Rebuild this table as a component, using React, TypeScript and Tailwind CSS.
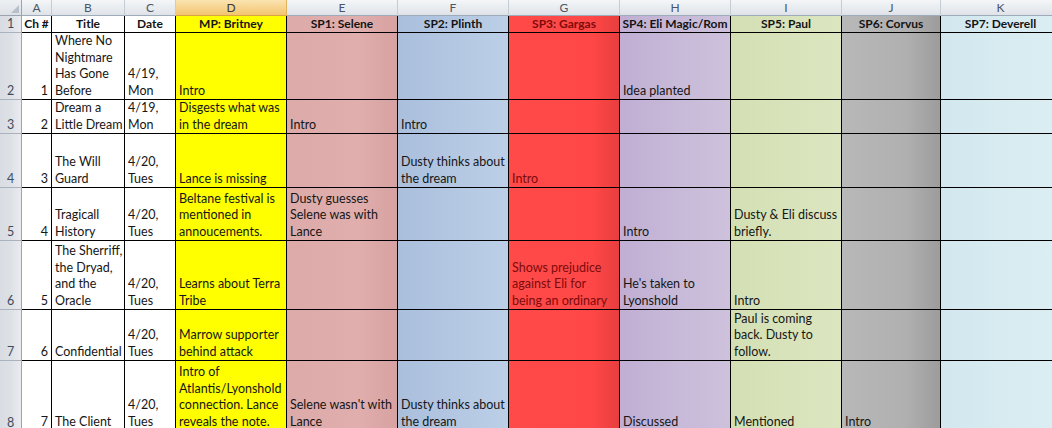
const colLetters = ["A", "B", "C", "D", "E", "F", "G", "H", "I", "J", "K"];

// fill per column, written out so tailwind picks them up
const fills: Record<string, string> = {
  A: "bg-white",
  B: "bg-white",
  C: "bg-white",
  D: "bg-[#ffff00]",
  E: "bg-linear-to-r from-[#dcaaa9] via-[#e0aead] via-65% to-[#d7a2a1]",
  F: "bg-linear-to-r from-[#aabfdc] via-[#b3c7e2] to-[#bccfe7]",
  G: "bg-linear-to-r from-[#ff4a4a] via-[#ff4747] via-75% to-[#e83e3e]",
  H: "bg-linear-to-r from-[#c0aed3] via-[#c7b9d8] to-[#cdc1dc]",
  I: "bg-linear-to-r from-[#d3dfb3] via-[#d8e3bb] to-[#dbe6c0]",
  J: "bg-linear-to-r from-[#b8b8b8] via-[#b0b0b0] via-65% to-[#9c9c9c]",
  K: "bg-linear-to-r from-[#d2e7ee] via-[#d7ebf1] to-[#dbeef3]",
};

const headers = [
  "Ch #",
  "Title",
  "Date",
  "MP: Britney",
  "SP1: Selene",
  "SP2: Plinth",
  "SP3: Gargas",
  "SP4: Eli Magic/Rom",
  "SP5: Paul",
  "SP6: Corvus",
  "SP7: Deverell",
];

type Row = { n: number; cells: Partial<Record<string, string[]>> };

const rows: Row[] = [
  {
    n: 2,
    cells: {
      A: ["1"],
      B: ["Where No", "Nightmare", "Has Gone", "Before"],
      C: ["4/19,", "Mon"],
      D: ["Intro"],
      H: ["Idea planted"],
    },
  },
  {
    n: 3,
    cells: {
      A: ["2"],
      B: ["Dream a", "Little Dream"],
      C: ["4/19,", "Mon"],
      D: ["Disgests what was", "in the dream"],
      E: ["Intro"],
      F: ["Intro"],
    },
  },
  {
    n: 4,
    cells: {
      A: ["3"],
      B: ["The Will", "Guard"],
      C: ["4/20,", "Tues"],
      D: ["Lance is missing"],
      F: ["Dusty thinks about", "the dream"],
      G: ["Intro"],
    },
  },
  {
    n: 5,
    cells: {
      A: ["4"],
      B: ["Tragicall", "History"],
      C: ["4/20,", "Tues"],
      D: ["Beltane festival is", "mentioned in", "annoucements."],
      E: ["Dusty guesses", "Selene was with", "Lance"],
      H: ["Intro"],
      I: ["Dusty & Eli discuss", "briefly."],
    },
  },
  {
    n: 6,
    cells: {
      A: ["5"],
      B: ["The Sherriff,", "the Dryad,", "and the", "Oracle"],
      C: ["4/20,", "Tues"],
      D: ["Learns about Terra", "Tribe"],
      G: ["Shows prejudice", "against Eli for", "being an ordinary"],
      H: ["He's taken to", "Lyonshold"],
      I: ["Intro"],
    },
  },
  {
    n: 7,
    cells: {
      A: ["6"],
      B: ["Confidential"],
      C: ["4/20,", "Tues"],
      D: ["Marrow supporter", "behind attack"],
      I: ["Paul is coming", "back. Dusty to", "follow."],
    },
  },
  {
    n: 8,
    cells: {
      A: ["7"],
      B: ["The Client"],
      C: ["4/20,", "Tues"],
      D: ["Intro of", "Atlantis/Lyonshold", "connection. Lance", "reveals the note."],
      E: ["Selene wasn't with", "Lance"],
      F: ["Dusty thinks about", "the dream"],
      H: ["Discussed"],
      I: ["Mentioned"],
      J: ["Intro"],
    },
  },
];

const RowHead = ({ n, last }: { n: number; last?: boolean }) => (
  <div
    className={`flex items-end justify-center border-r border-[#9aa4b1] bg-linear-to-r from-[#d9dde3] via-[#dde1e6] to-[#e9ebee] text-[12.5px] leading-[16.5px] text-[#3f4b5c] ${
      last ? "" : "border-b border-b-[#aab2bd]"
    }`}
  >
    {n}
  </div>
);

const Cell = ({ col, lines }: { col: string; lines?: string[] }) => (
  <div
    className={`flex flex-col justify-end overflow-hidden border-r border-b border-black px-[3px] text-[12.5px] leading-[16.5px] ${
      fills[col]
    } ${col === "G" ? "text-[#7d0b0b]" : "text-[#161616]"} ${
      col === "A" ? "items-end" : "items-start"
    }`}
  >
    {lines?.map((l, i) => (
      <span key={i} className="whitespace-nowrap">
        {l}
      </span>
    ))}
  </div>
);

export default function App() {
  return (
    <div className="h-[428px] w-[1052px] overflow-hidden bg-white font-['Lato','Liberation_Sans',sans-serif]">
      <div className="grid w-[1061px] grid-cols-[22px_30px_73px_51px_111px_111px_111px_111px_111px_111px_99px_120px] grid-rows-[16px_17px_67px_34px_54px_53px_69px_51px_70px]">
        {/* corner */}
        <div className="relative border-r border-b border-[#9aa4b1] bg-linear-to-b from-[#eef0f3] to-[#dde1e6]">
          <svg className="absolute right-[2px] bottom-[2px]" width="8" height="8" viewBox="0 0 8 8">
            <polygon points="8,0 8,8 0,8" fill="#b7bfca" />
          </svg>
        </div>
        {colLetters.map((c) => (
          <div
            key={c}
            className={`flex items-center justify-center border-r border-b text-[12px] leading-none ${
              c === "D"
                ? "border-r-[#e3b25a] border-b-[#d9a443] bg-linear-to-b from-[#fbe3b0] to-[#f2c56e] text-[#3a3a3a]"
                : "border-r-[#c6ccd4] border-b-[#9eabba] bg-linear-to-b from-[#f4f6f8] to-[#dfe3e8] text-[#4a5568]"
            }`}
          >
            {c}
          </div>
        ))}

        {/* header row */}
        <RowHead n={1} />
        {colLetters.map((c, i) => (
          <div
            key={c}
            className={`flex items-end justify-center overflow-hidden border-r border-b border-black text-[12px] leading-[16px] font-bold whitespace-nowrap ${
              fills[c]
            } ${c === "G" ? "text-[#7d0b0b]" : "text-[#141414]"}`}
          >
            {headers[i]}
          </div>
        ))}

        {rows.map((r, ri) => (
          <div key={r.n} className="contents">
            <RowHead n={r.n} last={ri === rows.length - 1} />
            {colLetters.map((c) => (
              <Cell key={c} col={c} lines={r.cells[c]} />
            ))}
          </div>
        ))}
      </div>
    </div>
  );
}
